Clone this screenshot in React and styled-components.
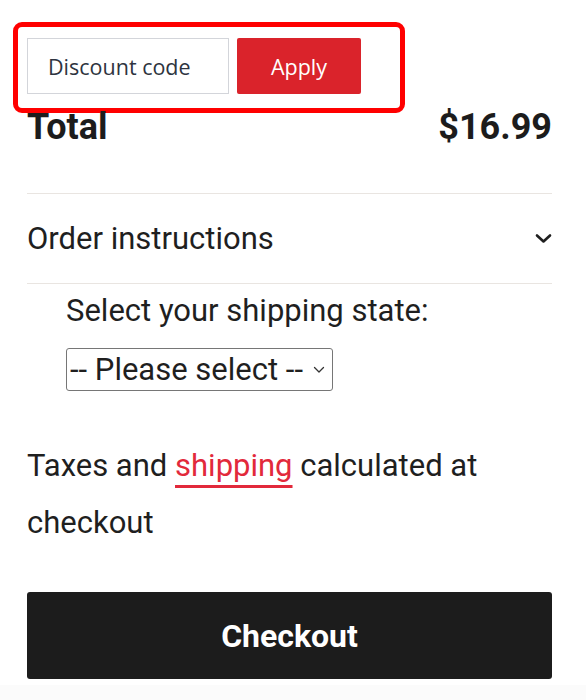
import React from "react";
import styled, { createGlobalStyle } from "styled-components";

const GlobalStyle = createGlobalStyle`
  html, body {
    margin: 0;
    padding: 0;
    background: #ffffff;
  }
  body {
    font-family: Roboto, "Liberation Sans", sans-serif;
    color: #1f1f1f;
  }
`;

const selectArrow =
  "url(\"data:image/svg+xml;utf8,<svg xmlns='http://www.w3.org/2000/svg' width='12' height='8' viewBox='0 0 12 8'><polyline points='1.5,1.5 6,6 10.5,1.5' fill='none' stroke='%23333' stroke-width='1.3' stroke-linecap='round' stroke-linejoin='round'/></svg>\")";

function Chevron() {
  return (
    <svg width="17" height="11" viewBox="0 0 17 11" fill="none">
      <polyline
        points="2,2.5 8.5,8.5 15,2.5"
        stroke="#1f1f1f"
        strokeWidth="2.6"
        strokeLinecap="round"
        strokeLinejoin="round"
      />
    </svg>
  );
}

function App() {
  return (
    <>
      <GlobalStyle />
      <Page>
        <Highlight>
          <DiscountForm>
            <CodeInput type="text" placeholder="Discount code" />
            <ApplyButton>Apply</ApplyButton>
          </DiscountForm>
        </Highlight>

        <TotalRow>
          <span>Total</span>
          <span>$16.99</span>
        </TotalRow>

        <Accordion>
          <span>Order instructions</span>
          <Chevron />
        </Accordion>

        <ShippingBlock>
          <Label htmlFor="state">Select your shipping state:</Label>
          <StateSelect id="state" defaultValue="">
            <option value="">-- Please select --</option>
          </StateSelect>
        </ShippingBlock>

        <Note>
          Taxes and <NoteLink href="#">shipping</NoteLink> calculated at checkout
        </Note>

        <CheckoutButton>Checkout</CheckoutButton>
      </Page>
      <Footer />
    </>
  );
}

const Page = styled.div`
  width: 525px;
  padding: 0 34px 0 27px;
`;

const Highlight = styled.div`
  box-sizing: border-box;
  width: 392px;
  margin: 22px 0 -3px -14px;
  padding: 11px 0 14px 9px;
  border: 5px solid #ff0000;
  border-radius: 9px;
`;

const DiscountForm = styled.div`
  display: flex;
  gap: 8px;
`;

const CodeInput = styled.input`
  box-sizing: border-box;
  width: 202px;
  height: 56px;
  padding: 0 0 0 20px;
  border: 1px solid #d3d5da;
  border-radius: 0;
  font-family: "Open Sans", sans-serif;
  font-size: 21.5px;
  color: #2e3440;
  outline: none;

  &::placeholder {
    color: #2e3440;
    opacity: 1;
  }
`;

const ApplyButton = styled.button`
  width: 124px;
  height: 56px;
  border: none;
  border-radius: 2px;
  background: #da232b;
  color: #ffffff;
  font-family: "Open Sans", sans-serif;
  font-size: 21.5px;
  cursor: pointer;
`;

const TotalRow = styled.div`
  display: flex;
  justify-content: space-between;
  align-items: baseline;
  padding-bottom: 48px;
  font-size: 36px;
  line-height: 35px;
  font-weight: 700;
  color: #1c1c1c;
  border-bottom: 1px solid #e9e5e1;
`;

const Accordion = styled.div`
  display: flex;
  justify-content: space-between;
  align-items: center;
  height: 89px;
  font-size: 31px;
  border-bottom: 1px solid #e9e5e1;
  cursor: pointer;
`;

const ShippingBlock = styled.div`
  display: flex;
  flex-direction: column;
  align-items: flex-start;
  gap: 19px;
  padding: 8px 0 0 39px;
`;

const Label = styled.label`
  font-size: 31px;
  line-height: 1.2;
`;

const StateSelect = styled.select`
  appearance: none;
  box-sizing: border-box;
  width: 267px;
  height: 43px;
  padding: 0 0 0 3px;
  font-family: Roboto, sans-serif;
  font-size: 31px;
  color: #1f1f1f;
  background: #ffffff ${selectArrow} no-repeat right 7px center;
  border: 1px solid #767676;
  border-radius: 3px;
`;

const Note = styled.p`
  margin: 46px 0 41px;
  font-size: 31px;
  line-height: 57px;
`;

const NoteLink = styled.a`
  color: #e2293b;
  text-decoration: underline;
  text-decoration-thickness: 2.5px;
  text-underline-offset: 9px;
`;

const CheckoutButton = styled.button`
  display: block;
  width: 100%;
  height: 87px;
  border: none;
  border-radius: 3px;
  background: #1c1c1c;
  color: #ffffff;
  font-family: Roboto, sans-serif;
  font-size: 32px;
  font-weight: 700;
  cursor: pointer;
`;

const Footer = styled.div`
  height: 30px;
  margin-top: 6px;
  background: #fbfbfb;
`;

export default App;
